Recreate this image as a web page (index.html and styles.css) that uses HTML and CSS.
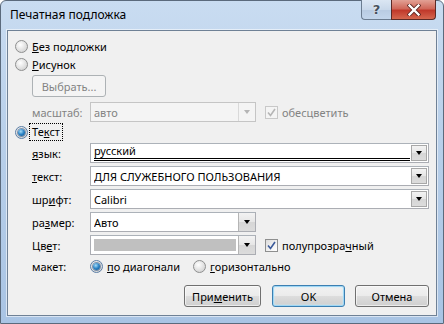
FILE: index.html
```html
<!DOCTYPE html>
<html lang="ru">
<head>
<meta charset="utf-8">
<title>Печатная подложка</title>
<link rel="stylesheet" href="styles.css">
</head>
<body>
<div class="window">
  <div class="titlebar">
    <span class="title">Печатная подложка</span>
    <div class="controls">
      <div class="btn-help">?</div>
      <div class="btn-close">
        <svg width="14" height="12" viewBox="0 0 14 12">
          <path d="M2.5 1.5 L11.5 10.5 M11.5 1.5 L2.5 10.5" stroke="#5a2420" stroke-width="4" stroke-linecap="square" fill="none"/>
          <path d="M2.5 1.5 L11.5 10.5 M11.5 1.5 L2.5 10.5" stroke="#ffffff" stroke-width="2.4" stroke-linecap="square" fill="none"/>
        </svg>
      </div>
    </div>
  </div>
  <div class="panel">
    <div class="row radio-row r1">
      <span class="radio"></span><span class="lbl"><u>Б</u>ез подложки</span>
    </div>
    <div class="row radio-row">
      <span class="radio"></span><span class="lbl"><u>Р</u>исунок</span>
    </div>
    <div class="row indent r3">
      <div class="button disabled wide">Выбрать...</div>
    </div>
    <div class="row indent r4">
      <span class="field-label disabled-text">масштаб:</span>
      <div class="combo short disabled">
        <span class="combo-text">авто</span>
        <span class="arrow"><span class="tri"></span></span>
      </div>
      <span class="check disabled">
        <svg width="9" height="9" viewBox="0 0 9 9"><path d="M1 4.5 L3.5 7.5 L8 1" stroke="#b5b5b5" stroke-width="1.6" fill="none"/></svg>
      </span>
      <span class="check-lbl disabled-text">обесцветить</span>
    </div>
    <div class="row radio-row r5">
      <span class="radio on"><span class="dot"></span></span><span class="lbl focus">Те<u>к</u>ст</span>
    </div>
    <div class="row indent r6">
      <span class="field-label"><u>я</u>зык:</span>
      <div class="combo full">
        <span class="combo-text lang"><u>русский</u></span>
        <span class="arrow"><span class="tri"></span></span>
      </div>
    </div>
    <div class="row indent rc">
      <span class="field-label"><u>т</u>екст:</span>
      <div class="combo full">
        <span class="combo-text">ДЛЯ СЛУЖЕБНОГО ПОЛЬЗОВАНИЯ</span>
        <span class="arrow"><span class="tri"></span></span>
      </div>
    </div>
    <div class="row indent rc">
      <span class="field-label">шр<u>и</u>фт:</span>
      <div class="combo full">
        <span class="combo-text">Calibri</span>
        <span class="arrow"><span class="tri"></span></span>
      </div>
    </div>
    <div class="row indent rc">
      <span class="field-label">ра<u>з</u>мер:</span>
      <div class="combo short">
        <span class="combo-text">Авто</span>
        <span class="arrow"><span class="tri"></span></span>
      </div>
    </div>
    <div class="row indent rc">
      <span class="field-label">Цв<u>е</u>т:</span>
      <div class="combo short">
        <span class="swatch"></span>
        <span class="arrow"><span class="tri"></span></span>
      </div>
      <span class="check">
        <svg width="9" height="9" viewBox="0 0 9 9"><path d="M1 4.5 L3.5 7.5 L8 1" stroke="#3b5a9a" stroke-width="1.6" fill="none"/></svg>
      </span>
      <span class="check-lbl">полупрозра<u>ч</u>ный</span>
    </div>
    <div class="row indent r11">
      <span class="field-label">макет:</span>
      <span class="radio on"><span class="dot"></span></span><span class="lbl"><u>п</u>о диагонали</span>
      <span class="radio second"></span><span class="lbl"><u>г</u>оризонтально</span>
    </div>
    <div class="row buttons">
      <div class="button b-apply">При<u>м</u>енить</div>
      <div class="button b-ok">OK</div>
      <div class="button b-cancel">Отмена</div>
    </div>
  </div>
</div>
</body>
</html>
```

FILE: styles.css
```css
* { box-sizing: border-box; }
html, body { margin: 0; padding: 0; }
body {
  font-family: "Noto Sans", "Open Sans", sans-serif;
  font-size: 11px;
  color: #000;
  background: #fff;
}
u { text-decoration: underline; text-underline-offset: 1px; }

.window {
  width: 444px;
  height: 324px;
  display: flex;
  flex-direction: column;
  background: linear-gradient(180deg, #c9dcf1 0%, #b9d0ea 40%, #a9c4e4 100%);
  border: 1px solid #5b6a7c;
  border-radius: 6px 6px 0 0;
}

.titlebar {
  height: 29px;
  display: flex;
  align-items: flex-start;
  padding-left: 9px;
}
.title {
  font-size: 12px;
  line-height: 14px;
  margin-top: 7px;
  color: #000;
}
.controls {
  margin-left: auto;
  margin-right: 7px;
  display: flex;
  margin-top: -1px;
}
.btn-help {
  width: 30px;
  height: 20px;
  border: 1px solid #6b7c90;
  border-top: none;
  border-right: none;
  border-radius: 0 0 0 4px;
  background: linear-gradient(180deg, #dbe6f3 0%, #c9d8ea 50%, #b8cbe2 51%, #c3d6ec 100%);
  display: flex;
  align-items: center;
  justify-content: center;
  font-family: "DejaVu Sans", sans-serif;
  font-size: 13px;
  font-weight: bold;
  color: #46505c;
  text-shadow: 0 0 2px #fff;
}
.btn-close {
  width: 45px;
  height: 20px;
  border: 1px solid #5b2a26;
  border-top: none;
  border-radius: 0 0 4px 0;
  background: linear-gradient(180deg, #e2a195 0%, #d0685a 45%, #c0392b 55%, #d5674f 100%);
  display: flex;
  align-items: center;
  justify-content: center;
}

.panel {
  flex: 1;
  margin: 0 6px 7px 6px;
  background: #f0f0f0;
  border: 1px solid #6f8196;
  box-shadow: 0 0 0 1px rgba(255,255,255,0.55);
  padding: 6px 7px 0 7px;
  display: flex;
  flex-direction: column;
}

.row { display: flex; align-items: center; }
.radio-row { height: 18px; }
.indent { padding-left: 17px; }
.r3 { margin-top: 2px; height: 22px; }
.r4 { margin-top: 5px; height: 20px; }
.r5 { margin-top: 1px; }
.r6 { margin-top: 2px; height: 20px; }
.rc { margin-top: 3px; height: 20px; }
.r11 { margin-top: 2px; height: 18px; }
.buttons { margin-top: 10px; height: 22px; justify-content: flex-end; }

.radio {
  width: 13px;
  height: 13px;
  border-radius: 50%;
  border: 1px solid #8e8f8f;
  background: radial-gradient(circle at 40% 35%, #ffffff 0%, #e6e6e6 45%, #c9c9c9 100%);
  display: flex;
  align-items: center;
  justify-content: center;
  flex: none;
}
.radio.on { border-color: #5b7ea6; }
.dot {
  width: 7px;
  height: 7px;
  border-radius: 50%;
  background: radial-gradient(circle at 40% 35%, #a6dcf8 0%, #2a82c4 50%, #0e4a86 100%);
  box-shadow: 0 0 0 1px rgba(20,60,110,0.5);
}
.lbl { margin-left: 4px; line-height: 15px; }
.lbl.focus {
  margin-left: 2px;
  padding: 0 2px;
  outline: 1px dotted #000;
  outline-offset: 0;
  height: 16px;
  line-height: 16px;
}
.r11 .radio.second { margin-left: 13px; }

.field-label { width: 58px; flex: none; }
.disabled-text { color: #838383; }

.combo {
  height: 20px;
  border: 1px solid #abadb3;
  border-top-color: #acb2b9;
  background: #fff;
  display: flex;
  align-items: center;
  padding-left: 3px;
  flex: none;
}
.combo.full { width: 339px; }
.combo.short { width: 166px; }
.combo.disabled { background: #f4f4f4; border-color: #c5c5c5; }
.combo-text { flex: 1; line-height: 15px; white-space: nowrap; overflow: hidden; }
.combo.disabled .combo-text { color: #838383; }
.combo-text.lang {
  align-self: flex-start;
  margin-top: 1px;
  height: 16px;
  border-bottom: 3px double #000;
  margin-right: 1px;
  line-height: 12px;
  overflow: visible;
}
.combo-text.lang u { text-decoration: none; }
.swatch {
  flex: 1;
  height: 12px;
  background: #c0c0c0;
  margin-right: 2px;
}
.arrow {
  width: 17px;
  height: 18px;
  border-left: 1px solid #b5b5b5;
  background: linear-gradient(180deg, #f3f3f3 0%, #e6e6e6 50%, #d6d6d6 51%, #dcdcdc 100%);
  display: flex;
  align-items: center;
  justify-content: center;
  flex: none;
}
.combo.full .arrow {
  height: 16px;
  width: 16px;
  border: 1px solid #a8a8a8;
  margin-right: 1px;
}
.tri {
  width: 0;
  height: 0;
  border-left: 3.5px solid transparent;
  border-right: 3.5px solid transparent;
  border-top: 4px solid #000;
}
.combo.disabled .arrow { background: #f4f4f4; border-left-color: #d9d9d9; }
.combo.disabled .tri { border-top-color: #b5b5b5; }

.check {
  width: 13px;
  height: 13px;
  margin-left: 9px;
  border: 1px solid #8e8f8f;
  background: linear-gradient(135deg, #dcdcdc 0%, #f6f6f6 70%, #ffffff 100%);
  display: flex;
  align-items: center;
  justify-content: center;
  flex: none;
}
.check.disabled { border-color: #c8c8c8; background: #f4f4f4; }
.check-lbl { margin-left: 4px; }

.button {
  height: 22px;
  border: 1px solid #707070;
  border-radius: 3px;
  background: linear-gradient(180deg, #f2f2f2 0%, #ebebeb 50%, #dddddd 51%, #cfcfcf 100%);
  display: flex;
  align-items: center;
  justify-content: center;
  box-shadow: inset 0 0 0 1px rgba(255,255,255,0.6);
}
.button.disabled {
  border-color: #adb2b5;
  background: #f4f4f4;
  color: #838383;
  box-shadow: none;
}
.wide { width: 74px; }
.b-apply { width: 77px; margin-right: 11px; }
.b-ok {
  width: 73px;
  margin-right: 10px;
  border-color: #3c7fb1;
  box-shadow: inset 0 0 0 1px #9fd7f5, inset 0 0 2px 1px #c8ecfc;
}
.b-cancel { width: 74px; }
```
